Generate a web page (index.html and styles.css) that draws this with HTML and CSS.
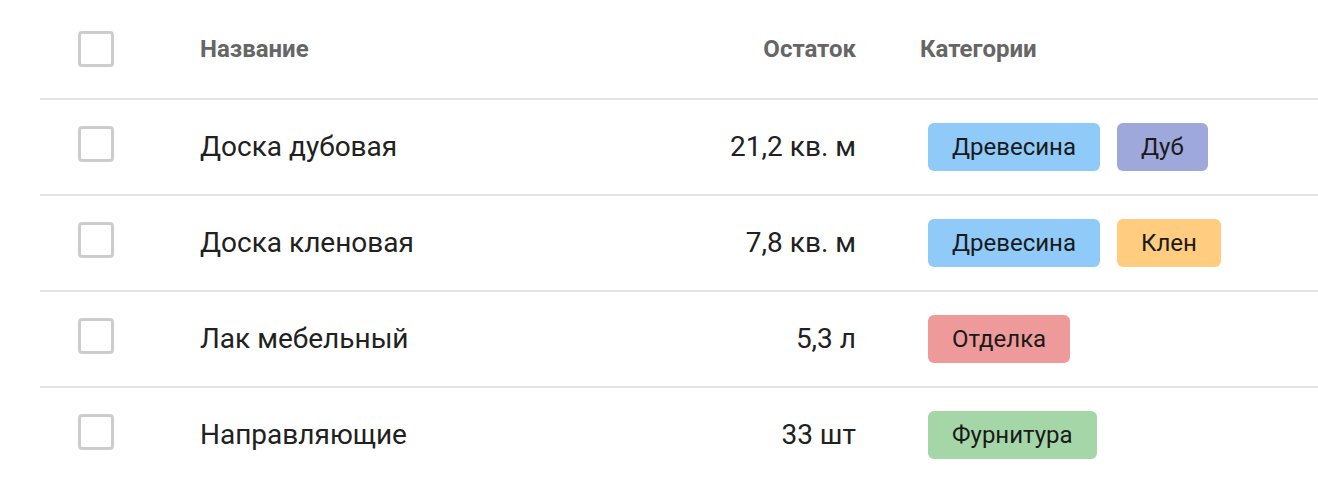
FILE: index.html
```html
<!DOCTYPE html>
<html lang="ru">
<head>
<meta charset="utf-8">
<link rel="stylesheet" href="styles.css">
</head>
<body>
<div class="wrap">
<table class="tbl">
  <colgroup>
    <col class="c-check">
    <col class="c-name">
    <col class="c-qty">
    <col class="c-cat">
  </colgroup>
  <thead>
    <tr>
      <th class="cell-check"><span class="box"></span></th>
      <th class="cell-name">Название</th>
      <th class="cell-qty">Остаток</th>
      <th class="cell-cat">Категории</th>
    </tr>
  </thead>
  <tbody>
    <tr>
      <td class="cell-check"><span class="box"></span></td>
      <td class="cell-name">Доска дубовая</td>
      <td class="cell-qty">21,2 кв. м</td>
      <td class="cell-cat"><span class="chip blue">Древесина</span><span class="chip indigo">Дуб</span></td>
    </tr>
    <tr>
      <td class="cell-check"><span class="box"></span></td>
      <td class="cell-name">Доска кленовая</td>
      <td class="cell-qty">7,8 кв. м</td>
      <td class="cell-cat"><span class="chip blue">Древесина</span><span class="chip orange">Клен</span></td>
    </tr>
    <tr>
      <td class="cell-check"><span class="box"></span></td>
      <td class="cell-name">Лак мебельный</td>
      <td class="cell-qty">5,3 л</td>
      <td class="cell-cat"><span class="chip red">Отделка</span></td>
    </tr>
    <tr>
      <td class="cell-check"><span class="box"></span></td>
      <td class="cell-name">Направляющие</td>
      <td class="cell-qty">33 шт</td>
      <td class="cell-cat"><span class="chip green">Фурнитура</span></td>
    </tr>
  </tbody>
</table>
</div>
</body>
</html>
```

FILE: styles.css
```css
html, body {
  margin: 0;
  padding: 0;
  background: #ffffff;
}
body {
  font-family: Roboto, "Noto Sans", "Liberation Sans", sans-serif;
  color: #212121;
}
.wrap {
  padding-left: 40px;
}
.tbl {
  width: 1278px;
  border-collapse: collapse;
  table-layout: fixed;
}
.c-check { width: 160px; }
.c-name { width: 480px; }
.c-qty { width: 240px; }
.c-cat { width: auto; }

.tbl th {
  height: 98px;
  padding: 0;
  font-size: 24px;
  font-weight: 700;
  color: #666666;
  text-align: left;
  border-bottom: 2px solid #e3e3e3;
  vertical-align: middle;
}
.tbl td {
  height: 94px;
  padding: 0;
  font-size: 28px;
  line-height: 30px;
  font-weight: 400;
  border-bottom: 2px solid #e3e3e3;
  vertical-align: middle;
}
.tbl tbody tr:last-child td {
  border-bottom: none;
}
.cell-check {
  padding-left: 38px !important;
}
.box {
  display: block;
  width: 30px;
  height: 30px;
  border: 3px solid #cccccc;
  border-radius: 4px;
}
.tbl td .box {
  margin-bottom: 6px;
}
.tbl .cell-qty {
  text-align: right;
  padding-right: 64px;
}
.cell-cat {
  white-space: nowrap;
}
.chip {
  display: inline-flex;
  align-items: center;
  height: 48px;
  padding: 0 24px;
  margin: 0 8px;
  border-radius: 6px;
  font-size: 24px;
  color: #1a1a1a;
  vertical-align: middle;
}
.chip + .chip { margin-left: 9px; }
.blue { background: #90caf9; }
.indigo { background: #9fa8da; }
.orange { background: #ffcc80; }
.red { background: #ef9a9a; }
.green { background: #a5d6a7; }
```
